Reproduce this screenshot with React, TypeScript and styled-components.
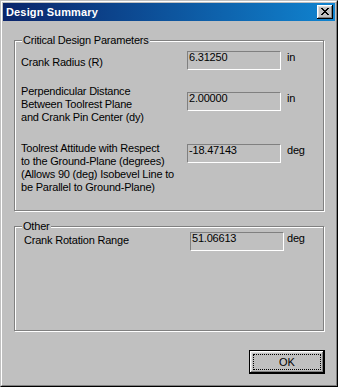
import styled, { createGlobalStyle } from 'styled-components'

const GlobalStyle = createGlobalStyle`
    html, body {
        margin: 0;
        padding: 0;
        background: #c0c0c0;
    }

    body {
        font-family: 'Liberation Sans', Arial, sans-serif;
        font-size: 11px;
        color: #000;
    }
`

const Window = styled.div`
    box-sizing: border-box;
    width: 338px;
    height: 387px;
    border: 1px solid;
    border-color: #c0c0c0 #000 #000 #c0c0c0;
    background: #c0c0c0;
`

const Frame = styled.div`
    box-sizing: border-box;
    height: 100%;
    padding: 1px;
    border: 1px solid;
    border-color: #fff #808080 #808080 #fff;
    display: flex;
    flex-direction: column;
`

const TitleBar = styled.div`
    height: 18px;
    padding: 0 2px 0 3px;
    display: flex;
    align-items: center;
    justify-content: space-between;
    background: linear-gradient(to right, #0a246a, #1084d0);
`

const Title = styled.span`
    color: #fff;
    font-weight: bold;
    font-size: 11px;
    line-height: 18px;
    letter-spacing: 0.15px;
`

const CloseButton = styled.button`
    box-sizing: border-box;
    width: 16px;
    height: 14px;
    margin: 0;
    padding: 3px 0 0 4px;
    border: 0;
    background: #c0c0c0;
    box-shadow: inset -1px -1px #000, inset 1px 1px #fff, inset -2px -2px #808080, inset 2px 2px #dfdfdf;
    display: flex;
    align-items: flex-start;
    justify-content: flex-start;

    svg {
        display: block;
    }
`

const Body = styled.div`
    flex: 1;
    padding: 19px 11px 10px;
    display: flex;
    flex-direction: column;
`

const Group = styled.div<{ $pad: string; $height?: number }>`
    position: relative;
    box-sizing: border-box;
    padding: ${p => p.$pad};
    height: ${p => (p.$height ? `${p.$height}px` : 'auto')};
    border: 1px solid #808080;
    box-shadow: inset 1px 1px #fff, 1px 1px #fff;

    & + & {
        margin-top: 15px;
    }
`

const Legend = styled.span`
    position: absolute;
    top: -7px;
    left: 7px;
    padding: 0 1px;
    background: #c0c0c0;
    line-height: 13px;
    letter-spacing: -0.2px;
    white-space: nowrap;
`

const Row = styled.div<{ $mt?: number }>`
    display: grid;
    grid-template-columns: 166px auto;
    align-items: start;
    margin-top: ${p => p.$mt ?? 0}px;
`

const Label = styled.div`
    line-height: 13px;
    letter-spacing: -0.2px;
    white-space: nowrap;
`

const Field = styled.div<{ $offset: number; $unitGap: number }>`
    margin-top: ${p => p.$offset}px;
    display: flex;
    align-items: flex-start;
    gap: ${p => p.$unitGap}px;
`

const ValueBox = styled.div`
    box-sizing: border-box;
    width: 94px;
    height: 19px;
    padding: 0 1px;
    border: 1px solid;
    border-color: #808080 #fff #fff #808080;
    line-height: 11px;
    letter-spacing: -0.2px;
    white-space: nowrap;
`

const Unit = styled.span`
    padding-top: 1px;
    line-height: 11px;
    letter-spacing: -0.2px;
`

const Footer = styled.div`
    margin-top: auto;
    margin-right: -1px;
    display: flex;
    justify-content: flex-end;
`

const OkButton = styled.button`
    box-sizing: border-box;
    width: 76px;
    height: 24px;
    margin: 0;
    padding: 3px;
    border: 1px solid #000;
    background: #c0c0c0;
    box-shadow: inset -1px -1px #000, inset 1px 1px #fff, inset -2px -2px #808080, inset 2px 2px #dfdfdf;
    font: 11px 'Liberation Sans', Arial, sans-serif;
    color: #000;
    display: flex;
`

const FocusRing = styled.span`
    flex: 1;
    border: 1px dotted #000;
    display: flex;
    align-items: center;
    justify-content: center;
    line-height: 11px;
`

const CloseGlyph = () => (
    <svg width='8' height='7' viewBox='0 0 8 7' shapeRendering='crispEdges'>
        <path
            fill='#000'
            d='M0 0h2v1H0zM6 0h2v1H6zM1 1h2v1H1zM5 1h2v1H5zM2 2h4v1H2zM3 3h2v1H3zM2 4h4v1H2zM1 5h2v1H1zM5 5h2v1H5zM0 6h2v1H0zM6 6h2v1H6z'
        />
    </svg>
)

type Param = {
    label: string[]
    value: string
    unit: string
    mt: number
    offset: number
}

const critical: Param[] = [
    { label: ['Crank Radius (R)'], value: '6.31250', unit: 'in', mt: 0, offset: -5 },
    {
        label: ['Perpendicular Distance', 'Between Toolrest Plane', 'and Crank Pin Center (dy)'],
        value: '2.00000',
        unit: 'in',
        mt: 15,
        offset: 7,
    },
    {
        label: [
            'Toolrest Attitude with Respect',
            'to the Ground-Plane (degrees)',
            '(Allows 90 (deg) Isobevel Line to',
            'be Parallel to Ground-Plane)',
        ],
        value: '-18.47143',
        unit: 'deg',
        mt: 18,
        offset: 2,
    },
]

const ParamRow = ({ p, unitGap }: { p: Param; unitGap: number }) => (
    <Row $mt={p.mt}>
        <Label>
            {p.label.map((line, i) => (
                <div key={i}>{line}</div>
            ))}
        </Label>
        <Field $offset={p.offset} $unitGap={unitGap}>
            <ValueBox>{p.value}</ValueBox>
            <Unit>{p.unit}</Unit>
        </Field>
    </Row>
)

export default function App() {
    return (
        <>
            <GlobalStyle />
            <Window>
                <Frame>
                    <TitleBar>
                        <Title>Design Summary</Title>
                        <CloseButton aria-label='Close'>
                            <CloseGlyph />
                        </CloseButton>
                    </TitleBar>
                    <Body>
                        <Group $pad='15px 6px 16px'>
                            <Legend>Critical Design Parameters</Legend>
                            {critical.map((p, i) => (
                                <ParamRow key={i} p={p} unitGap={6} />
                            ))}
                        </Group>
                        <Group $pad='7px 9px 0' $height={105}>
                            <Legend>Other</Legend>
                            <ParamRow
                                p={{ label: ['Crank Rotation Range'], value: '51.06613', unit: 'deg', mt: 0, offset: -2 }}
                                unitGap={3}
                            />
                        </Group>
                        <Footer>
                            <OkButton>
                                <FocusRing>OK</FocusRing>
                            </OkButton>
                        </Footer>
                    </Body>
                </Frame>
            </Window>
        </>
    )
}
